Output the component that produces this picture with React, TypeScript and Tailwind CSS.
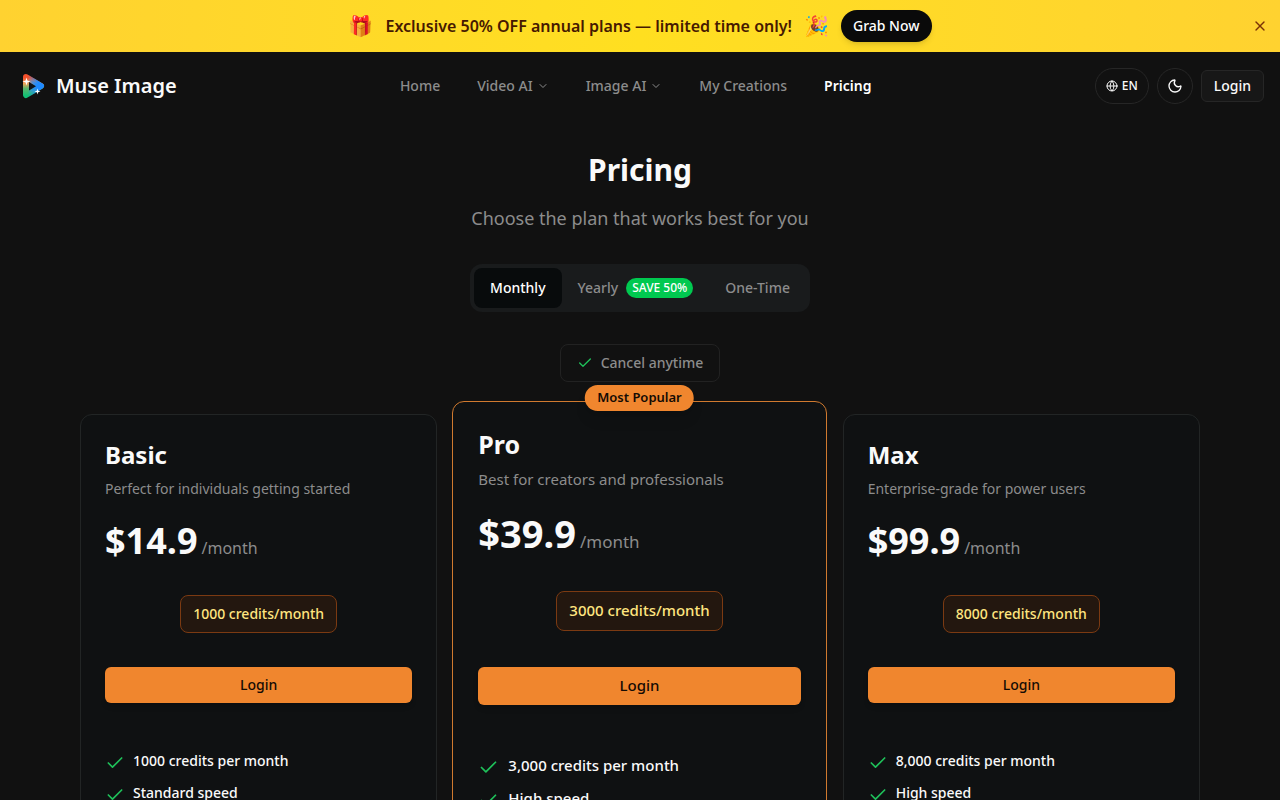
import React from 'react';
import { Check, ChevronDown, Globe, Moon, X } from 'lucide-react';
import clsx from 'clsx';

interface Plan {
  name: string;
  description: string;
  price: string;
  credits: string;
  features: string[];
  popular?: boolean;
}

const plans: Plan[] = [
  {
    name: 'Basic',
    description: 'Perfect for individuals getting started',
    price: '$14.9',
    credits: '1000 credits/month',
    features: ['1000 credits per month', 'Standard speed'],
  },
  {
    name: 'Pro',
    description: 'Best for creators and professionals',
    price: '$39.9',
    credits: '3000 credits/month',
    features: ['3,000 credits per month', 'High speed'],
    popular: true,
  },
  {
    name: 'Max',
    description: 'Enterprise-grade for power users',
    price: '$99.9',
    credits: '8000 credits/month',
    features: ['8,000 credits per month', 'High speed'],
  },
];

const navItems = [
  { label: 'Home' },
  { label: 'Video AI', menu: true },
  { label: 'Image AI', menu: true },
  { label: 'My Creations' },
  { label: 'Pricing', active: true },
];

const Logo: React.FC = () => (
  <svg className="h-8 w-8" viewBox="0 0 32 32" aria-hidden="true">
    <defs>
      <linearGradient id="left" gradientUnits="userSpaceOnUse" x1="0" y1="4" x2="0" y2="28">
        <stop offset="0.15" stopColor="#f4512c" />
        <stop offset="0.4" stopColor="#f0a35a" />
        <stop offset="0.6" stopColor="#5fb56c" />
        <stop offset="0.9" stopColor="#12c074" />
      </linearGradient>
      <linearGradient id="right" gradientUnits="userSpaceOnUse" x1="12" y1="0" x2="22" y2="0">
        <stop offset="0" stopColor="#1f8bff" stopOpacity="0" />
        <stop offset="1" stopColor="#1f8bff" />
      </linearGradient>
    </defs>
    <path d="M10 7 L25 16 L10 25 Z" fill="url(#left)" stroke="url(#left)" strokeWidth="6" strokeLinejoin="round" />
    <path d="M10 7 L25 16 L10 25 Z" fill="url(#right)" stroke="url(#right)" strokeWidth="6" strokeLinejoin="round" />
    <path d="M13 12 L20 16.3 L13 20.5 Z" fill="#101418" />
    <path d="M10.5 7.5 L11.4 10.4 L14.5 11.5 L11.4 12.6 L10.5 15.5 L9.6 12.6 L6.5 11.5 L9.6 10.4 Z" fill="#fff" />
    <path d="M21.5 18.5 L22.2 20.8 L24.5 21.5 L22.2 22.2 L21.5 24.5 L20.8 22.2 L18.5 21.5 L20.8 20.8 Z" fill="#fff" />
  </svg>
);

const Banner: React.FC = () => (
  <div className="flex h-13 items-center bg-linear-to-r from-[#ffd230] via-[#ffdf20] to-[#ffd230] px-3">
    <div className="flex flex-1 items-center justify-center gap-3 pl-4">
      <span className="text-xl">🎁</span>
      <p className="font-semibold text-[#461901]">Exclusive 50% OFF annual plans — limited time only!</p>
      <span className="text-xl">🎉</span>
      <button className="h-8 rounded-full bg-[#0a0a0a] px-3 text-sm font-medium text-white shadow-md">Grab Now</button>
    </div>
    <button aria-label="Close" className="text-[#7b3306]">
      <X className="h-4 w-4" />
    </button>
  </div>
);

const Header: React.FC = () => (
  <header className="flex h-17 items-center justify-between px-4">
    <a href="#" className="flex items-center gap-2 text-xl font-semibold">
      <Logo />
      Muse Image
    </a>
    <nav className="flex items-center gap-[37px] text-sm font-medium text-[#8c8c8c]">
      {navItems.map((item) => (
        <a
          key={item.label}
          href="#"
          className={clsx('flex items-center gap-1', item.active && 'font-semibold text-white')}
        >
          {item.label}
          {item.menu && <ChevronDown className="h-3 w-3" />}
        </a>
      ))}
    </nav>
    <div className="flex items-center gap-2 font-medium">
      <button className="flex h-9 items-center gap-1 rounded-full border border-[#262626] px-2.5 text-xs">
        <Globe className="h-3 w-3" />
        EN
      </button>
      <button
        aria-label="Dark mode"
        className="flex h-9 w-9 items-center justify-center rounded-full border border-[#262626]"
      >
        <Moon className="h-4 w-4" />
      </button>
      <button className="h-8 rounded-md border border-[#262626] bg-[#171717] px-3 text-sm">Login</button>
    </div>
  </header>
);

const PlanCard: React.FC<{ plan: Plan }> = ({ plan }) => {
  const { popular } = plan;

  return (
    <section
      className={clsx(
        'relative rounded-xl border bg-[#0f1112]',
        popular ? '-mt-[13px] -mr-2 -mb-3 -ml-[9px] border-[#d07a2f] p-[25px]' : 'border-[#222525] p-6',
      )}
    >
      {popular && (
        <span className="absolute -top-[17px] left-1/2 flex h-[26px] -translate-x-1/2 items-center rounded-full bg-[#f0862e] px-3 text-[13px] font-semibold whitespace-nowrap text-[#140b04] shadow-lg">
          Most Popular
        </span>
      )}
      <h2 className={clsx('font-bold', popular ? 'text-[25px] leading-[34px]' : 'text-2xl')}>{plan.name}</h2>
      <p className={clsx('mt-2 text-[#8c8c8c]', popular ? 'text-[15px] leading-[21px]' : 'text-sm')}>
        {plan.description}
      </p>
      <div className="mt-[22px] flex items-baseline gap-1">
        <span className={clsx('font-bold', popular ? 'text-[38px] leading-[42px]' : 'text-4xl')}>{plan.price}</span>
        <span className={clsx('text-[#8c8c8c]', popular ? 'text-[17px]' : 'text-base')}>/month</span>
      </div>
      <div className={clsx('flex justify-center', popular ? 'mt-9' : 'mt-[34px]')}>
        <span
          className={clsx(
            'flex items-center rounded-lg border border-[#7b3a12] bg-[#23170f] px-3 font-medium text-[#ffe57f]',
            popular ? 'h-10 text-[15px]' : 'h-[38px] text-sm',
          )}
        >
          {plan.credits}
        </span>
      </div>
      <button
        className={clsx(
          'w-full rounded-md bg-[#f0862e] font-medium text-[#140b04] shadow-md',
          popular ? 'mt-9 h-[38px] text-[15px]' : 'mt-[34px] h-9 text-sm',
        )}
      >
        Login
      </button>
      <ul className={clsx('flex flex-col gap-2.5', popular ? 'mt-[50px]' : 'mt-12')}>
        {plan.features.map((feature) => (
          <li
            key={feature}
            className={clsx(
              'flex items-start font-medium',
              popular ? 'gap-[9px] text-[15px] leading-[21px]' : 'gap-2 text-sm',
            )}
          >
            <Check className={clsx('mt-0.5 shrink-0 text-[#1fc05a]', popular ? 'h-[21px] w-[21px]' : 'h-5 w-5')} />
            {feature}
          </li>
        ))}
      </ul>
    </section>
  );
};

export default function App() {
  return (
    <div className="min-h-screen bg-[#111111] font-['Noto_Sans',sans-serif] text-[#fafafa]">
      <Banner />
      <Header />
      <main className="mx-auto max-w-6xl px-4 pt-8">
        <div className="text-center">
          <h1 className="text-3xl font-bold">Pricing</h1>
          <p className="mt-4 text-lg text-[#8c8c8c]">Choose the plan that works best for you</p>
        </div>
        <div className="mt-8 flex flex-col items-center gap-8">
          <div className="flex h-12 items-center rounded-xl bg-[#191b1c] p-1 text-sm font-medium text-[#8c8c8c]">
            <button className="h-10 rounded-lg bg-[#080b0c] px-4 text-white">Monthly</button>
            <button className="flex h-10 items-center gap-2 px-4">
              Yearly
              <span className="rounded-full bg-[#00c950] px-1.5 py-0.5 text-xs text-white">SAVE 50%</span>
            </button>
            <button className="h-10 px-4">One-Time</button>
          </div>
          <div className="flex h-[38px] items-center gap-2 rounded-lg border border-[#222222] px-4 text-sm font-medium text-[#8c8c8c]">
            <Check className="h-4 w-4 text-[#1fc05a]" />
            Cancel anytime
          </div>
        </div>
        <div className="mt-8 grid grid-cols-3 gap-6">
          {plans.map((plan) => (
            <PlanCard key={plan.name} plan={plan} />
          ))}
        </div>
      </main>
    </div>
  );
}
